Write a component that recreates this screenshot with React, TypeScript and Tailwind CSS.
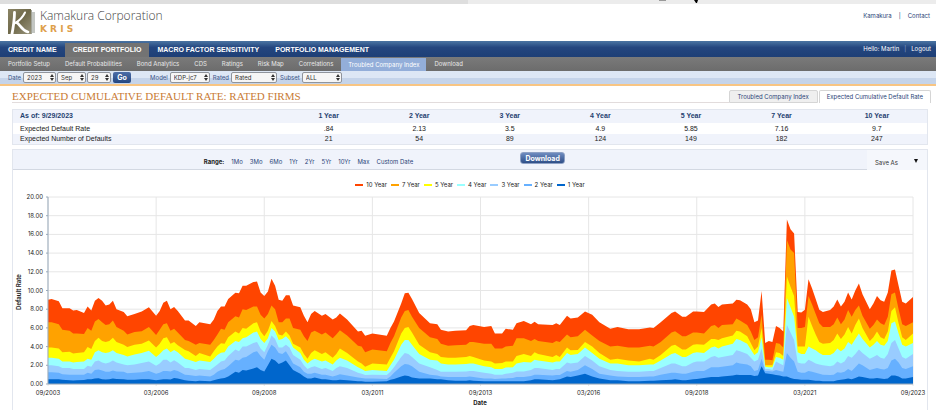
import React from 'react';
import clsx from 'clsx';

const MAIN_NAV = ['CREDIT NAME', 'CREDIT PORTFOLIO', 'MACRO FACTOR SENSITIVITY', 'PORTFOLIO MANAGEMENT'];

const SUB_NAV = [
    'Portfolio Setup',
    'Default Probabilities',
    'Bond Analytics',
    'CDS',
    'Ratings',
    'Risk Map',
    'Correlations',
    'Troubled Company Index',
    'Download',
];

const RANGES = ['1Mo', '3Mo', '6Mo', '1Yr', '2Yr', '5Yr', '10Yr', 'Max', 'Custom Date'];

const TERMS = [
    { label: '1 Year', rate: '.84', count: '21' },
    { label: '2 Year', rate: '2.13', count: '54' },
    { label: '3 Year', rate: '3.5', count: '89' },
    { label: '4 Year', rate: '4.9', count: '124' },
    { label: '5 Year', rate: '5.85', count: '149' },
    { label: '7 Year', rate: '7.16', count: '182' },
    { label: '10 Year', rate: '9.7', count: '247' },
];

// Longest term first, so the shorter ones are painted over it
const SERIES = [
    { label: '10 Year', color: '#ff4500' },
    { label: '7 Year', color: '#ffa200' },
    { label: '5 Year', color: '#ffff00' },
    { label: '4 Year', color: '#99ffff' },
    { label: '3 Year', color: '#99ccff' },
    { label: '2 Year', color: '#66b0ff' },
    { label: '1 Year', color: '#0066cc' },
];

// [months since 09/2003, 10y, 7y, 5y, 4y, 3y, 2y, 1y]
const RATES: number[][] = [
    [0, 9.0, 6.6, 3.9, 2.8, 2.0, 1.25, 0.5],
    [1, 9.1, 6.6, 3.9, 2.8, 2.0, 1.25, 0.5],
    [3, 8.85, 6.4, 3.8, 2.7, 1.9, 1.2, 0.5],
    [4, 8.1, 5.8, 3.4, 2.4, 1.7, 1.05, 0.45],
    [6, 8.1, 5.7, 3.45, 2.4, 1.7, 1.0, 0.4],
    [7, 7.85, 5.4, 3.25, 2.3, 1.6, 1.0, 0.38],
    [8, 7.9, 5.4, 3.3, 2.35, 1.6, 1.0, 0.4],
    [10, 7.6, 5.35, 3.4, 2.4, 1.6, 1.0, 0.42],
    [11, 8.3, 6.0, 3.95, 2.7, 1.95, 1.2, 0.5],
    [12, 7.85, 5.7, 3.75, 2.6, 1.85, 1.1, 0.5],
    [13, 8.9, 6.7, 4.6, 3.4, 2.4, 1.5, 0.6],
    [14, 9.2, 6.95, 4.95, 3.6, 2.5, 1.55, 0.62],
    [15, 8.9, 6.6, 4.6, 3.4, 2.3, 1.45, 0.5],
    [16, 8.4, 6.3, 4.5, 3.3, 2.2, 1.3, 0.48],
    [17, 8.5, 6.4, 4.6, 3.4, 2.3, 1.3, 0.5],
    [18, 8.9, 6.8, 4.95, 3.6, 2.5, 1.45, 0.6],
    [19, 8.0, 6.1, 4.5, 3.3, 2.3, 1.35, 0.55],
    [21, 7.7, 5.7, 4.2, 3.1, 2.1, 1.3, 0.5],
    [22, 7.25, 5.3, 3.95, 2.95, 2.0, 1.15, 0.45],
    [24, 7.5, 5.55, 4.2, 3.15, 2.1, 1.2, 0.45],
    [26, 7.75, 5.65, 4.3, 3.3, 2.25, 1.25, 0.5],
    [28, 8.2, 6.1, 4.65, 3.55, 2.4, 1.4, 0.5],
    [30, 7.3, 5.25, 3.9, 2.9, 1.95, 1.1, 0.4],
    [31, 7.8, 5.8, 4.3, 3.2, 2.2, 1.2, 0.45],
    [32, 8.7, 6.4, 4.9, 3.6, 2.6, 1.4, 0.5],
    [33, 8.9, 6.5, 5.0, 3.8, 2.6, 1.4, 0.5],
    [34, 8.0, 5.7, 4.3, 3.4, 2.3, 1.35, 0.48],
    [35, 8.25, 5.9, 4.5, 3.65, 2.55, 1.5, 0.65],
    [36, 7.8, 5.5, 4.15, 3.4, 2.3, 1.4, 0.6],
    [38, 6.8, 4.7, 3.65, 2.7, 1.7, 1.0, 0.4],
    [39, 6.8, 4.6, 3.5, 2.6, 1.7, 0.95, 0.35],
    [41, 6.2, 4.2, 3.0, 2.35, 1.5, 0.85, 0.3],
    [42, 6.6, 4.4, 3.3, 2.5, 1.6, 0.9, 0.35],
    [45, 6.4, 4.2, 2.95, 2.35, 1.5, 0.8, 0.3],
    [46, 6.9, 4.7, 3.5, 2.7, 1.8, 1.0, 0.4],
    [47, 7.8, 5.3, 4.0, 3.1, 2.1, 1.3, 0.5],
    [48, 8.3, 5.9, 4.35, 3.35, 2.4, 1.5, 0.6],
    [49, 8.3, 5.8, 4.3, 3.4, 2.5, 1.6, 0.65],
    [50, 9.1, 6.6, 5.0, 4.0, 3.0, 1.9, 0.8],
    [52, 9.75, 7.25, 5.6, 4.6, 3.7, 2.6, 1.3],
    [53, 9.7, 7.1, 5.4, 4.5, 3.5, 2.5, 1.2],
    [54, 10.5, 8.0, 6.0, 4.9, 4.0, 2.8, 1.5],
    [55, 10.5, 7.9, 5.9, 5.0, 4.0, 2.9, 1.45],
    [57, 10.9, 8.3, 6.5, 5.5, 4.4, 3.4, 1.65],
    [58, 10.95, 8.3, 6.6, 5.6, 4.5, 3.5, 1.8],
    [59, 9.8, 7.4, 5.6, 4.8, 3.8, 3.0, 1.5],
    [60, 9.4, 7.0, 5.1, 4.4, 3.4, 2.6, 1.35],
    [61, 9.9, 7.5, 5.7, 4.9, 4.2, 3.5, 2.0],
    [62, 11.25, 8.4, 6.75, 6.0, 5.2, 4.2, 2.7],
    [63, 10.5, 8.0, 6.2, 5.6, 4.8, 3.9, 2.5],
    [64, 9.0, 6.6, 5.3, 4.7, 3.9, 3.3, 2.15],
    [65, 8.9, 6.6, 5.2, 4.8, 3.9, 3.2, 2.3],
    [66, 9.5, 7.0, 5.6, 5.1, 4.2, 3.5, 2.5],
    [67, 9.5, 7.0, 5.2, 4.7, 3.9, 2.9, 2.0],
    [68, 8.4, 6.0, 4.3, 3.9, 3.1, 2.2, 1.5],
    [70, 8.2, 5.8, 3.9, 3.3, 2.6, 1.8, 1.1],
    [71, 7.3, 5.1, 3.2, 2.6, 2.0, 1.3, 0.8],
    [72, 6.6, 4.6, 2.7, 2.2, 1.6, 1.1, 0.6],
    [73, 7.5, 5.5, 3.3, 2.5, 1.8, 1.1, 0.6],
    [74, 7.8, 5.7, 3.6, 2.7, 1.9, 1.2, 0.7],
    [76, 7.3, 5.3, 3.2, 2.4, 1.6, 1.0, 0.5],
    [77, 7.5, 5.5, 3.4, 2.5, 1.7, 1.0, 0.5],
    [79, 6.9, 4.9, 2.8, 2.1, 1.4, 0.8, 0.4],
    [80, 7.1, 5.3, 3.2, 2.5, 1.7, 0.9, 0.4],
    [81, 7.55, 5.75, 3.8, 2.8, 1.9, 1.05, 0.45],
    [83, 6.9, 5.2, 3.3, 2.5, 1.7, 0.9, 0.4],
    [86, 5.6, 4.1, 2.4, 1.8, 1.2, 0.7, 0.3],
    [87, 5.7, 4.0, 2.2, 1.6, 1.1, 0.65, 0.3],
    [88, 5.15, 3.4, 1.85, 1.4, 0.95, 0.6, 0.25],
    [90, 5.4, 3.7, 2.2, 1.5, 1.0, 0.6, 0.25],
    [94, 5.15, 3.5, 2.1, 1.4, 0.95, 0.55, 0.3],
    [95, 6.0, 4.4, 2.8, 2.0, 1.3, 0.8, 0.45],
    [96, 6.7, 5.1, 3.5, 2.6, 1.8, 1.2, 0.55],
    [98, 8.6, 7.1, 5.4, 4.2, 2.9, 1.9, 0.8],
    [99, 9.7, 7.8, 6.0, 4.7, 3.3, 2.15, 0.9],
    [100, 9.75, 7.9, 6.1, 4.7, 3.2, 2.1, 0.85],
    [101, 9.1, 7.2, 5.5, 4.2, 2.9, 1.9, 0.7],
    [103, 7.6, 6.0, 4.2, 3.2, 2.2, 1.3, 0.6],
    [106, 6.5, 5.0, 3.4, 2.6, 1.8, 1.0, 0.6],
    [108, 6.4, 4.8, 3.2, 2.5, 1.5, 0.9, 0.5],
    [109, 5.8, 4.3, 2.9, 2.2, 1.3, 0.8, 0.5],
    [111, 5.6, 4.1, 2.8, 2.1, 1.3, 0.75, 0.4],
    [113, 5.7, 4.15, 2.8, 2.1, 1.3, 0.75, 0.35],
    [116, 5.75, 4.2, 2.9, 2.15, 1.35, 0.75, 0.35],
    [117, 6.2, 4.5, 3.0, 2.2, 1.4, 0.8, 0.4],
    [118, 6.3, 4.5, 2.9, 2.2, 1.4, 0.75, 0.35],
    [121, 6.1, 4.3, 2.5, 1.9, 1.2, 0.6, 0.3],
    [123, 6.2, 4.3, 2.4, 1.8, 1.1, 0.6, 0.3],
    [124, 5.4, 3.8, 2.2, 1.6, 1.0, 0.55, 0.3],
    [126, 5.4, 3.8, 2.25, 1.6, 1.0, 0.6, 0.3],
    [127, 5.9, 4.0, 2.4, 1.75, 1.1, 0.6, 0.3],
    [129, 5.8, 4.1, 2.4, 1.8, 1.2, 0.65, 0.3],
    [130, 6.5, 4.9, 3.0, 2.2, 1.35, 0.75, 0.3],
    [132, 6.75, 4.9, 3.2, 2.35, 1.35, 0.75, 0.3],
    [134, 6.4, 4.6, 3.0, 2.3, 1.5, 0.85, 0.4],
    [135, 6.65, 4.8, 3.4, 2.6, 1.7, 1.0, 0.5],
    [136, 6.4, 4.6, 3.2, 2.5, 1.7, 1.0, 0.5],
    [140, 6.3, 4.4, 2.9, 2.3, 1.5, 0.9, 0.4],
    [141, 6.5, 4.6, 3.1, 2.4, 1.6, 0.95, 0.45],
    [142, 6.3, 4.5, 2.9, 2.4, 1.6, 0.95, 0.5],
    [144, 7.3, 5.3, 3.9, 3.3, 2.3, 1.4, 0.8],
    [145, 7.0, 5.0, 3.6, 3.1, 2.2, 1.3, 0.75],
    [147, 7.1, 5.1, 3.65, 3.2, 2.3, 1.5, 0.9],
    [149, 7.75, 5.8, 4.5, 3.9, 3.0, 2.0, 1.1],
    [151, 7.4, 5.2, 4.0, 3.3, 2.5, 1.6, 0.8],
    [153, 6.6, 4.6, 3.3, 2.7, 1.9, 1.1, 0.6],
    [156, 5.9, 4.0, 2.6, 2.2, 1.5, 0.9, 0.4],
    [158, 6.1, 4.1, 2.7, 2.2, 1.4, 0.8, 0.4],
    [161, 5.85, 3.9, 2.5, 2.0, 1.3, 0.75, 0.3],
    [164, 5.85, 3.9, 2.4, 2.0, 1.3, 0.75, 0.3],
    [167, 6.05, 4.1, 2.7, 2.1, 1.4, 0.8, 0.35],
    [168, 6.0, 4.0, 2.6, 2.1, 1.4, 0.8, 0.35],
    [170, 6.6, 4.5, 3.1, 2.5, 1.7, 1.0, 0.4],
    [173, 7.6, 5.5, 4.1, 3.2, 2.2, 1.2, 0.45],
    [174, 7.75, 5.65, 4.2, 3.3, 2.2, 1.2, 0.5],
    [176, 7.2, 5.1, 3.7, 2.9, 1.9, 1.1, 0.4],
    [177, 7.2, 5.1, 3.7, 2.9, 1.9, 1.1, 0.4],
    [179, 7.75, 5.5, 4.2, 3.3, 2.3, 1.3, 0.5],
    [180, 7.75, 5.5, 4.25, 3.4, 2.4, 1.4, 0.55],
    [182, 7.7, 5.4, 4.2, 3.3, 2.4, 1.4, 0.65],
    [184, 8.5, 6.2, 4.8, 3.9, 2.9, 1.8, 0.75],
    [185, 8.6, 6.3, 4.8, 4.0, 3.0, 1.8, 0.75],
    [186, 8.25, 6.0, 4.7, 3.8, 2.8, 1.8, 0.75],
    [187, 8.5, 6.3, 4.9, 4.0, 2.9, 1.85, 0.8],
    [190, 8.6, 6.4, 5.2, 4.3, 3.1, 2.0, 0.9],
    [191, 9.0, 7.0, 5.7, 4.8, 3.6, 2.3, 1.0],
    [192, 8.95, 6.8, 5.6, 4.7, 3.5, 2.2, 0.95],
    [194, 8.5, 6.3, 5.1, 4.3, 3.2, 2.1, 0.95],
    [195, 8.0, 5.6, 4.4, 3.7, 2.8, 1.9, 0.95],
    [196, 6.6, 4.7, 3.6, 3.1, 2.4, 1.4, 0.85],
    [197, 6.8, 5.0, 4.0, 3.4, 2.6, 1.5, 0.9],
    [198, 9.95, 7.4, 6.0, 5.0, 3.8, 2.7, 1.9],
    [199, 4.4, 2.6, 2.0, 1.85, 1.6, 1.4, 1.15],
    [200, 4.6, 2.6, 2.0, 1.8, 1.6, 1.4, 1.1],
    [201, 4.5, 2.55, 2.0, 1.8, 1.5, 1.35, 1.05],
    [202, 6.2, 4.4, 3.4, 2.9, 2.4, 1.5, 0.95],
    [203, 6.0, 4.3, 3.3, 2.8, 2.2, 1.4, 0.9],
    [204, 5.6, 3.9, 3.0, 2.6, 2.0, 1.3, 0.8],
    [205, 17.6, 15.4, 11.5, 9.2, 6.3, 3.3, 0.8],
    [206, 16.55, 14.4, 10.4, 8.2, 5.5, 2.8, 0.65],
    [207, 16.1, 14.0, 9.4, 7.2, 4.7, 2.4, 0.55],
    [208, 7.7, 6.0, 4.0, 3.4, 2.3, 1.3, 0.5],
    [209, 7.65, 6.0, 4.0, 3.2, 2.2, 1.2, 0.45],
    [210, 7.95, 6.1, 4.0, 3.2, 2.2, 1.2, 0.45],
    [211, 11.2, 9.4, 7.2, 4.0, 2.6, 1.4, 0.45],
    [212, 10.2, 8.5, 6.2, 3.8, 2.4, 1.3, 0.4],
    [213, 9.1, 7.5, 5.3, 3.6, 2.2, 1.2, 0.35],
    [214, 7.95, 6.5, 4.5, 3.3, 2.1, 1.1, 0.35],
    [215, 7.7, 6.1, 4.3, 3.1, 2.0, 1.0, 0.3],
    [217, 7.9, 6.1, 4.4, 3.1, 1.9, 0.95, 0.3],
    [218, 8.3, 6.4, 4.7, 3.3, 2.0, 1.0, 0.3],
    [219, 9.05, 7.1, 5.4, 3.8, 2.4, 1.25, 0.4],
    [220, 8.3, 6.4, 4.8, 3.5, 2.2, 1.2, 0.45],
    [221, 8.8, 6.9, 5.3, 3.8, 2.4, 1.3, 0.5],
    [222, 9.8, 7.9, 6.1, 4.5, 3.0, 1.6, 0.6],
    [223, 9.05, 7.2, 5.4, 4.2, 2.8, 1.4, 0.5],
    [224, 10.0, 7.9, 6.3, 4.8, 3.2, 1.8, 0.65],
    [225, 10.75, 8.4, 7.0, 5.4, 3.7, 2.2, 0.8],
    [226, 9.6, 7.3, 6.0, 4.8, 3.3, 2.0, 0.75],
    [228, 8.0, 5.9, 4.6, 3.9, 2.7, 1.5, 0.6],
    [229, 8.6, 6.3, 5.0, 4.2, 2.9, 1.6, 0.6],
    [230, 9.4, 6.9, 5.6, 4.6, 3.1, 1.7, 0.65],
    [231, 8.95, 6.5, 5.0, 4.2, 2.8, 1.6, 0.6],
    [232, 8.8, 6.3, 4.8, 4.1, 2.7, 1.55, 0.55],
    [233, 9.8, 7.2, 5.6, 4.6, 3.2, 1.7, 0.6],
    [234, 12.15, 9.6, 7.8, 6.5, 4.4, 2.5, 0.9],
    [235, 12.25, 9.8, 8.2, 6.7, 4.7, 2.7, 0.9],
    [236, 10.5, 8.0, 6.5, 5.4, 3.8, 2.3, 0.8],
    [237, 8.8, 6.4, 5.0, 4.2, 2.9, 1.7, 0.6],
    [238, 8.6, 6.2, 4.7, 4.0, 2.7, 1.6, 0.6],
    [240, 9.3, 6.6, 5.4, 4.4, 3.2, 1.9, 0.75],
];

const X_TICKS = ['09/2003', '03/2006', '09/2008', '03/2011', '09/2013', '03/2016', '09/2018', '03/2021', '09/2023'];
const Y_TICKS = [0, 2, 4, 6, 8, 10, 12, 14, 16, 18, 20];

const PLOT = { left: 35, right: 900, top: 7, bottom: 194 };

const toX = (month: number) => PLOT.left + (month / 240) * (PLOT.right - PLOT.left);
const toY = (rate: number) => PLOT.bottom - (rate / 20) * (PLOT.bottom - PLOT.top);

function areaPoints(column: number) {
    const line = RATES.map((row) => `${toX(row[0]).toFixed(1)},${toY(row[column]).toFixed(1)}`);
    return [`${PLOT.left},${PLOT.bottom}`, ...line, `${PLOT.right},${PLOT.bottom}`].join(' ');
}

function Logo() {
    return (
        <svg className="mt-px h-[30px] w-7" viewBox="0 0 28 30" aria-hidden="true">
            <defs>
                <linearGradient id="logoTile" x1="0" y1="0" x2="1" y2="1">
                    <stop offset="0" stopColor="#8b8566" />
                    <stop offset="0.5" stopColor="#6f694a" />
                    <stop offset="1" stopColor="#9a957d" />
                </linearGradient>
            </defs>
            <rect x="6" y="3" width="21" height="21" fill="#c3c6c2" />
            <rect x="3" y="1" width="21" height="24" fill="#a3a499" />
            <rect x="0" y="0" width="23" height="25" fill="url(#logoTile)" />
            <path d="M6.5 3.5 C6.500 12 5 20 3.500 27.500" fill="none" stroke="#fff" strokeWidth="2.8" strokeLinecap="round" />
            <path d="M17 3.5 C14.500 9 11 12 6.5 14.5" fill="none" stroke="#fff" strokeWidth="2" strokeLinecap="round" />
            <path d="M8.5 13.5 C12 15 13 21 20 23" fill="none" stroke="#fff" strokeWidth="2.6" strokeLinecap="round" />
        </svg>
    );
}

function PickList({ label, hideLabel, value, className }: { label: string; hideLabel?: boolean; value: string; className: string }) {
    return (
        <label className="flex items-center gap-0.5 text-[#3b5488]">
            {!hideLabel && <span>{label}</span>}
            <span className="relative flex">
                <select
                    aria-label={label}
                    defaultValue={value}
                    className={clsx(
                        'h-[11px] appearance-none rounded-[2px] border border-[#8f949c] bg-[#f6f6f6] pl-[3px] text-[6px] leading-[9px] text-[#333]',
                        className,
                    )}
                >
                    <option>{value}</option>
                </select>
                <svg className="pointer-events-none absolute top-[2px] right-[2px] h-[7px] w-1" viewBox="0 0 4 7" fill="#333">
                    <path d="M2 0 L4 3 H0 Z M2 7 L4 4 H0 Z" />
                </svg>
            </span>
        </label>
    );
}

function DefaultRateChart() {
    return (
        <svg className="block h-auto w-full" viewBox="0 0 914 220" role="img" aria-label="Default rate by date">
            <g stroke="#e6e6e6" strokeWidth="1">
                {Y_TICKS.map((tick) => (
                    <line key={tick} x1={PLOT.left} x2={PLOT.right} y1={toY(tick)} y2={toY(tick)} />
                ))}
                {X_TICKS.map((tick, i) => (
                    <line key={tick} x1={toX(i * 30)} x2={toX(i * 30)} y1={PLOT.top} y2={PLOT.bottom + 2} />
                ))}
            </g>
            {SERIES.map((series, i) => (
                <polygon key={series.label} points={areaPoints(i + 1)} fill={series.color} />
            ))}
            <path d={`M${PLOT.left} ${PLOT.top} V${PLOT.bottom} H${PLOT.right}`} fill="none" stroke="#9ab" strokeWidth="1" />
            <g fill="#222" className="text-[6px]">
                {Y_TICKS.map((tick) => (
                    <React.Fragment key={tick}>
                        <line x1={PLOT.left - 2} x2={PLOT.left} y1={toY(tick)} y2={toY(tick)} stroke="#9ab" />
                        <text x={PLOT.left - 5} y={toY(tick) + 2} textAnchor="end">
                            {tick.toFixed(2)}
                        </text>
                    </React.Fragment>
                ))}
                {X_TICKS.map((tick, i) => (
                    <text key={tick} x={toX(i * 30)} y={205} textAnchor="middle">
                        {tick}
                    </text>
                ))}
                <text x={467} y={215} textAnchor="middle" className="font-bold">
                    Date
                </text>
                <text transform="translate(8 102) rotate(-90)" textAnchor="middle" className="font-bold">
                    Default Rate
                </text>
            </g>
        </svg>
    );
}

export default function App() {
    return (
        <div className="bg-white font-['Inter','Liberation_Sans',sans-serif] text-[6px] leading-[8px] text-[#222]">
            {/* Bottom edge of the browser toolbar */}
            <div className="flex h-1 bg-[#ececec]">
                <div className="w-1/2 bg-[#dedede]" />
                <svg className="ml-auto h-1 w-[280px]" viewBox="0 0 280 4" aria-hidden="true">
                    <path d="M3 0 H10 V1 H3 Z" fill="#999" />
                    <path d="M38 0 H42 L41 3 L40 3 Z" fill="#000" />
                </svg>
            </div>

            <header className="flex h-[37px] items-start justify-between pt-1 pr-[6px] pl-2">
                <div className="flex gap-1">
                    <Logo />
                    <div>
                        <p className="font-['Open_Sans',sans-serif] text-[12px] leading-[16px] font-light text-[#444]">
                            Kamakura Corporation
                        </p>
                        <p className="font-['DejaVu_Sans',sans-serif] text-[9px] leading-[10px] font-bold text-[#dea04a]">K R I S</p>
                    </div>
                </div>
                <nav className="mt-1 flex gap-[7px] text-[#2b4478]">
                    <a href="#">Kamakura</a>
                    <span>|</span>
                    <a href="#">Contact</a>
                </nav>
            </header>

            <div className="flex h-4 items-stretch justify-between bg-linear-to-b from-[#47709f] from-5% via-[#24467f] via-40% to-[#1e3f76] pr-[5px] text-white">
                <nav className="flex font-['Liberation_Sans',sans-serif] text-[7px] font-bold">
                    {MAIN_NAV.map((item) => (
                        <a
                            key={item}
                            href="#"
                            className={clsx('mt-0.5 flex items-center px-2', item === 'CREDIT PORTFOLIO' && 'bg-[#737373]')}
                        >
                            {item}
                        </a>
                    ))}
                </nav>
                <div className="flex items-center gap-[5px]">
                    <span>Hello: Martin</span>
                    <span className="text-[#8fa5cb]">|</span>
                    <a href="#">Logout</a>
                </div>
            </div>

            <nav className="flex h-[14px] gap-px bg-linear-to-b from-[#7a7a7a] to-[#6c6c6c] pl-px text-[#e8e8e8]">
                {SUB_NAV.map((item) => (
                    <a
                        key={item}
                        href="#"
                        className={clsx(
                            'flex items-center px-[7px]',
                            item === 'Troubled Company Index' && 'mt-px bg-[#93aed9] text-white',
                        )}
                    >
                        {item}
                    </a>
                ))}
            </nav>

            <form className="flex h-[15px] items-center gap-px border-b-2 border-[#f8c583] bg-linear-to-b from-[#dde7f5] from-50% to-[#c5d4ea] to-50% pl-2">
                <PickList label="Date" value="2023" className="w-[33px]" />
                <PickList label="Month" hideLabel value="Sep" className="w-[29px]" />
                <PickList label="Day" hideLabel value="29" className="w-6" />
                <button
                    type="button"
                    className="ml-px h-[11px] w-[18px] rounded-[2px] bg-linear-to-b from-[#4d6ea8] to-[#24467f] text-[7px] leading-[9px] font-bold text-white"
                >
                    Go
                </button>
                <div className="ml-[18px] flex gap-[3px]">
                    <PickList label="Model" value="KDP-jc7" className="w-10" />
                    <PickList label="Rated" value="Rated" className="w-[46px]" />
                    <PickList label="Subset" value="ALL" className="w-10" />
                </div>
            </form>

            <div className="flex items-end pt-1 pr-[5px] pl-3">
                <h1 className="flex-1 border-b border-[#e2dcdc] font-['Liberation_Serif',serif] text-[11px] leading-[12px] text-[#c97b35]">
                    EXPECTED CUMULATIVE DEFAULT RATE: RATED FIRMS
                </h1>
                <div className="flex gap-px text-[#2b4478]">
                    <a href="#" className="rounded-t-[2px] border border-[#d5d5d5] bg-[#efefef] px-2 pt-0.5 pb-px">
                        Troubled Company Index
                    </a>
                    <a href="#" className="rounded-t-[2px] border border-b-0 border-[#d5d5d5] px-[7px] pt-0.5 pb-0.5">
                        Expected Cumulative Default Rate
                    </a>
                </div>
            </div>

            <main className="pr-2 pl-3">
                <table className="mt-[6px] w-full table-fixed border border-[#e2e6ee] text-center font-['Liberation_Sans',sans-serif] text-[7px]">
                    <colgroup>
                        <col className="w-[29.6%]" />
                        {TERMS.map((term) => (
                            <col key={term.label} className={term.label === '10 Year' ? 'w-[11%]' : 'w-[9.9%]'} />
                        ))}
                    </colgroup>
                    <thead>
                        <tr className="h-[13px] bg-[#f0f3fb] text-[#1f3f70]">
                            <th className="pl-[7px] text-left">As of: 9/29/2023</th>
                            {TERMS.map((term) => (
                                <th key={term.label}>{term.label}</th>
                            ))}
                        </tr>
                    </thead>
                    <tbody>
                        <tr className="h-[11px] leading-[9px]">
                            <td className="pl-[7px] text-left">Expected Default Rate</td>
                            {TERMS.map((term) => (
                                <td key={term.label}>{term.rate}</td>
                            ))}
                        </tr>
                        <tr className="h-[11px] bg-[#f0f3fb] leading-[9px]">
                            <td className="pl-[7px] text-left">Expected Number of Defaults</td>
                            {TERMS.map((term) => (
                                <td key={term.label}>{term.count}</td>
                            ))}
                        </tr>
                    </tbody>
                </table>

                <section className="mt-1 border-x border-t border-[#e2e6ee]">
                    <div className="grid h-5 grid-cols-[44%_1fr_auto] items-start border-b border-[#d3d8e2] bg-[#f0f3fb]">
                        <div className="flex justify-end gap-[7px] pt-2 pr-0.5 text-[#2b4478]">
                            <b className="text-[#222]">Range:</b>
                            {RANGES.map((range) => (
                                <a key={range} href="#">
                                    {range}
                                </a>
                            ))}
                        </div>
                        <button
                            type="button"
                            className="mt-0.5 ml-[105px] h-3 w-[45px] rounded-[3px] border border-[#8da0c4] bg-linear-to-b from-[#6f8cc0] to-[#2f4f88] text-[7px] leading-[9px] font-bold text-white"
                        >
                            Download
                        </button>
                        <button type="button" className="flex h-5 w-[60px] items-center justify-between bg-[#f5f7fc] pt-[5px] pr-[9px] pl-2 text-[#333]">
                            Save As
                            <svg className="-mt-1 h-1 w-1" viewBox="0 0 4 4" fill="#111">
                                <path d="M0 0 H4 L2 4 Z" />
                            </svg>
                        </button>
                    </div>

                    <ul className="flex h-5 items-center justify-center gap-1 pt-[9px]">
                        {SERIES.map((series) => (
                            <li key={series.label} className="flex items-center gap-[3px]">
                                <svg className="h-0.5 w-2" viewBox="0 0 8 2">
                                    <rect width="8" height="2" fill={series.color} />
                                </svg>
                                {series.label}
                            </li>
                        ))}
                    </ul>

                    <DefaultRateChart />
                </section>
            </main>
        </div>
    );
}
